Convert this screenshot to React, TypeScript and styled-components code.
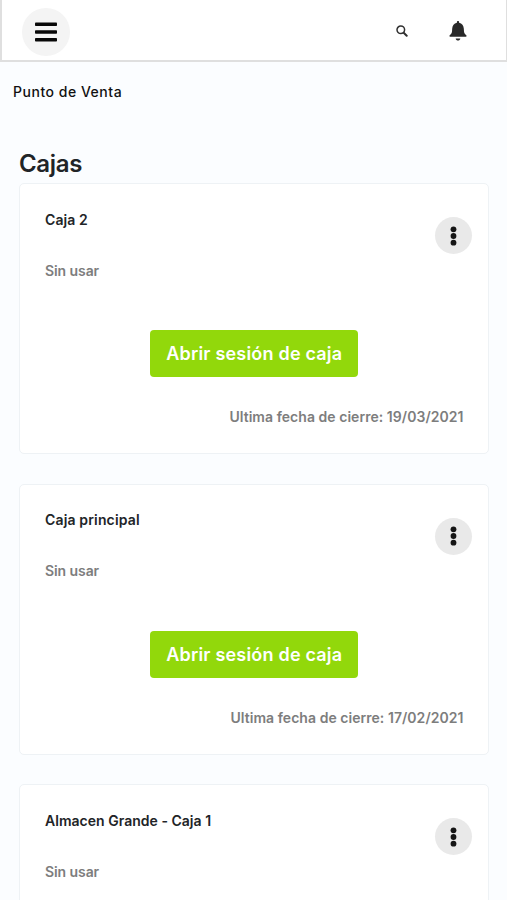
import React from "react";
import styled, { createGlobalStyle } from "styled-components";

const GlobalStyle = createGlobalStyle`
  *, *::before, *::after { box-sizing: border-box; }
  html, body { margin: 0; height: 100%; overflow: hidden; background: #fbfdff; }
  body { font-family: Inter, "Liberation Sans", sans-serif; color: #212427; }
  h1, h2, p { margin: 0; }
  button { font: inherit; border: 0; padding: 0; }
`;

const Page = styled.div`
  height: 900px;
  overflow: hidden;
`;

const TopBar = styled.header`
  display: flex;
  align-items: center;
  height: 62px;
  padding: 0 39px 0 20px;
  background: #fff;
  border: solid #dfdfdf;
  border-width: 0 1px 2px 2px;
`;

const MenuButton = styled.button`
  display: grid;
  place-items: center;
  width: 48px;
  height: 48px;
  margin-top: 3px;
  border-radius: 50%;
  background: #f4f4f4;
`;

const Actions = styled.div`
  display: flex;
  align-items: center;
  gap: 41px;
  margin: 2px 0 0 auto;
`;

const Breadcrumb = styled.p`
  padding: 20px 13px 0;
  font-size: 14px;
  line-height: 20px;
  font-weight: 500;
  letter-spacing: 0.52px;
  color: #111;
`;

const Main = styled.main`
  padding: 47px 18.5px 0 19px;
`;

const Title = styled.h1`
  height: 34px;
  font-size: 24px;
  line-height: 30px;
  font-weight: 600;
  letter-spacing: -0.35px;
`;

const CardList = styled.div`
  display: flex;
  flex-direction: column;
  gap: 29.7px;
`;

const Card = styled.section`
  display: flex;
  flex-direction: column;
  height: 271px;
  flex: none;
  padding: 25px 24px 0 25px;
  background: #fff;
  border: 1px solid #eef2f5;
  border-radius: 5px;
`;

const CardHeader = styled.div`
  display: flex;
  justify-content: space-between;
  height: 71px;
`;

const CardName = styled.h2<{ $spacing: number }>`
  padding-top: 0.5px;
  font-size: 14px;
  line-height: 20px;
  font-weight: 600;
  letter-spacing: ${(p) => p.$spacing}px;
`;

const Status = styled.p`
  padding-top: 31px;
  font-size: 14px;
  line-height: 20px;
  font-weight: 600;
  letter-spacing: -0.08px;
  color: #7d7d7d;
`;

const MoreButton = styled.button`
  display: grid;
  place-items: center;
  width: 37px;
  height: 37px;
  margin: 8px -8px 0 0;
  border-radius: 50%;
  background: #e9e9e9;
`;

const OpenButton = styled.button`
  align-self: center;
  width: 208px;
  height: 47px;
  flex: none;
  margin-top: 50.4px;
  border-radius: 4px;
  background: #92d80b;
  color: #fff;
  font-size: 18px;
  line-height: 46px;
  font-weight: 600;
  letter-spacing: 0.2px;
  white-space: nowrap;
`;

const ClosingDate = styled.p`
  align-self: flex-end;
  margin-top: 30px;
  font-size: 14px;
  line-height: 20px;
  font-weight: 600;
  letter-spacing: 0.04px;
  white-space: nowrap;
  color: #7d7d7d;
`;

type Register = { name: string; spacing: number; closed?: string };

const registers: Register[] = [
  { name: "Caja 2", closed: "19/03/2021", spacing: 0.1 },
  { name: "Caja principal", closed: "17/02/2021", spacing: 0.15 },
  { name: "Almacen Grande - Caja 1", spacing: 0.02 },
];

const MenuIcon = () => (
  <svg width="22" height="20" viewBox="0 0 22 20" fill="#080808">
    <rect y="0.5" width="22" height="3.6" rx="0.8" />
    <rect y="8.2" width="22" height="3.6" rx="0.8" />
    <rect y="15.9" width="22" height="3.6" rx="0.8" />
  </svg>
);

const SearchIcon = () => (
  <svg width="12" height="12" viewBox="0 0 12 12" fill="none" stroke="#303030">
    <circle cx="4.8" cy="4.8" r="3.8" strokeWidth="1.5" />
    <path d="M7.7 7.7 10.7 10.7" strokeWidth="2" strokeLinecap="round" />
  </svg>
);

const BellIcon = () => (
  <svg width="18" height="20" viewBox="0 0 18 20" fill="#292929">
    <path d="M9 0c-.7 0-1.100.5-1.100 1.100v.6C5 2.300 3.400 4.500 3.200 7.400L3 10.600c-.1 1.500-.9 2.500-2 3.500-.4.3-.6.6-.6 1 0 .4.3.7.8.7h15.600c.5 0 .8-.3.8-.7 0-.4-.2-.7-.6-1-1.100-1-1.900-2-2-3.500l-.2-3.200C14.600 4.500 13 2.300 10.100 1.700v-.6C10.100.5 9.700 0 9 0Z" />
    <path d="M6.700 17.400h4.600c-.2 1.300-1.100 2.100-2.300 2.100s-2.100-.8-2.300-2.100Z" />
  </svg>
);

const DotsIcon = () => (
  <svg width="7" height="20" viewBox="0 0 7 20" fill="#151515">
    <circle cx="3.500" cy="3.300" r="2.900" />
    <circle cx="3.500" cy="10" r="2.900" />
    <circle cx="3.500" cy="16.700" r="2.900" />
  </svg>
);

export default function App() {
  return (
    <Page>
      <GlobalStyle />
      <TopBar>
        <MenuButton aria-label="Menú">
          <MenuIcon />
        </MenuButton>
        <Actions>
          <SearchIcon />
          <BellIcon />
        </Actions>
      </TopBar>
      <Breadcrumb>Punto de Venta</Breadcrumb>
      <Main>
        <Title>Cajas</Title>
        <CardList>
          {registers.map((r) => (
            <Card key={r.name}>
              <CardHeader>
                <div>
                  <CardName $spacing={r.spacing}>{r.name}</CardName>
                  <Status>Sin usar</Status>
                </div>
                <MoreButton aria-label="Opciones">
                  <DotsIcon />
                </MoreButton>
              </CardHeader>
              {r.closed && (
                <>
                  <OpenButton>Abrir sesión de caja</OpenButton>
                  <ClosingDate>Ultima fecha de cierre: {r.closed}</ClosingDate>
                </>
              )}
            </Card>
          ))}
        </CardList>
      </Main>
    </Page>
  );
}
